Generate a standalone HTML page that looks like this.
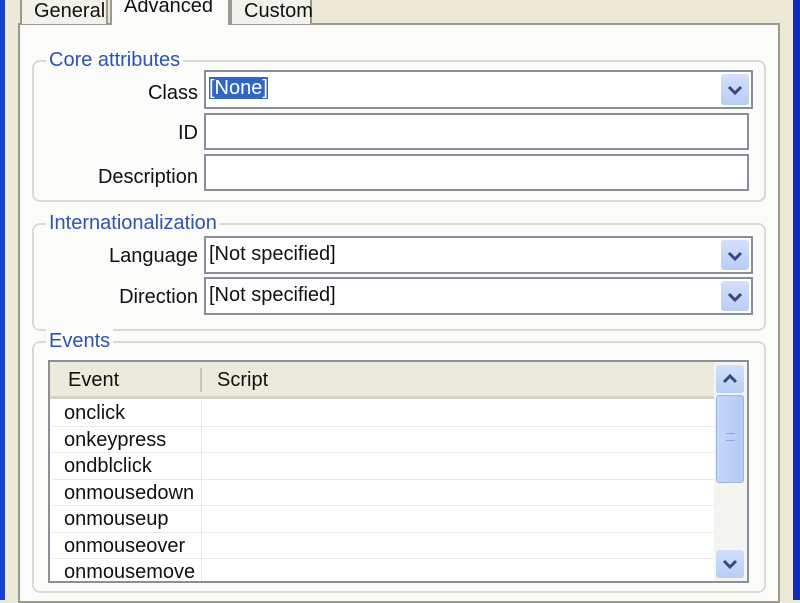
<!DOCTYPE html><html><head><style>
*{box-sizing:border-box;margin:0;padding:0}
body{width:800px;height:600px;overflow:hidden;background:#ece9d8;font-family:"Liberation Sans",sans-serif;font-size:20px;color:#111;position:relative}
.a{position:absolute}
.tab{position:absolute;border:2px solid #9a9a90;border-bottom:none;border-radius:4px 4px 0 0;background:#f2f2ea;padding-left:12px;line-height:22px}
.grp{position:absolute;border:2px solid #dcdad0;border-radius:8px}
.gl{position:absolute;color:#2a55b0;background:#fbfbf9;padding:0 3px;top:-14px;left:12px;line-height:24px}
.in{position:absolute;border:2px solid #8a8e98;background:#fff;line-height:32px;padding-left:3px}
.dd{position:absolute;right:2px;top:2px;bottom:2px;width:28px;background:linear-gradient(#d4e0fb,#b8cdf6);border-radius:3px}
.lbl{position:absolute;text-align:right;width:190px;left:8px}
.row{position:absolute;left:2px;width:662px;height:26.5px;border-bottom:1px solid #eceae0;padding-left:12px;line-height:26px}
</style></head><body>
<div class="a" style="left:0;top:0;width:5px;height:600px;background:#1a3fd0"></div>
<div class="a" style="left:793px;top:0;width:7px;height:600px;background:#0b2db8"></div>
<div class="a" style="left:18px;top:23px;width:762px;height:580px;background:#fbfbf9;border:2px solid #9a9a90"></div>
<div class="tab" style="left:20px;top:-4px;width:88px;height:28px;line-height:26px">General</div>
<div class="tab" style="left:230px;top:-4px;width:82px;height:28px;line-height:26px">Custom</div>
<div class="tab" style="left:110px;top:-10px;width:120px;height:35px;background:#fbfbf9;border-top:3px solid #e8a030;line-height:26px">Advanced</div>

<div class="grp" style="left:32px;top:60px;width:734px;height:142px"><div class="gl">Core attributes</div></div>
<div class="lbl" style="top:82px">Class</div>
<div class="in" style="left:204px;top:70px;width:549px;height:39px"><span style="background:#3166c5;color:#fff;line-height:22px;display:inline-block;margin-top:5px">[None]</span><div class="dd"><svg width="28" height="33"><path d="M8 13l6 6 6-6" stroke="#344a80" stroke-width="3" fill="none"/></svg></div></div>
<div class="lbl" style="top:122px">ID</div>
<div class="in" style="left:204px;top:113px;width:545px;height:37px"></div>
<div class="lbl" style="top:166px">Description</div>
<div class="in" style="left:204px;top:154px;width:545px;height:37px"></div>

<div class="grp" style="left:32px;top:223px;width:734px;height:108px"><div class="gl">Internationalization</div></div>
<div class="lbl" style="top:245px">Language</div>
<div class="in" style="left:204px;top:236px;width:549px;height:38px">[Not specified]<div class="dd"><svg width="28" height="32"><path d="M8 13l6 6 6-6" stroke="#344a80" stroke-width="3" fill="none"/></svg></div></div>
<div class="lbl" style="top:286px">Direction</div>
<div class="in" style="left:204px;top:277px;width:549px;height:38px">[Not specified]<div class="dd"><svg width="28" height="32"><path d="M8 13l6 6 6-6" stroke="#344a80" stroke-width="3" fill="none"/></svg></div></div>

<div class="grp" style="left:32px;top:341px;width:734px;height:252px"><div class="gl">Events</div></div>
<div class="a" style="left:48px;top:360px;width:701px;height:223px;border:2px solid #8a8e98;background:#fff;overflow:hidden">
<div class="a" style="left:0;top:0;width:664px;height:37px;background:#ebeadb;border-bottom:3px solid #d6d3c4;line-height:36px"><span class="a" style="left:18px">Event</span><span class="a" style="left:167px">Script</span><div class="a" style="left:150px;top:6px;width:2px;height:24px;background:#c8c5b6"></div></div>
<div class="a" style="left:151px;top:38px;width:1px;height:190px;background:#eceae0"></div>
<div class="row" style="top:38px">onclick</div>
<div class="row" style="top:64.5px">onkeypress</div>
<div class="row" style="top:91px">ondblclick</div>
<div class="row" style="top:117.5px">onmousedown</div>
<div class="row" style="top:144px">onmouseup</div>
<div class="row" style="top:170.5px">onmouseover</div>
<div class="row" style="top:197px">onmousemove</div>
<div class="a" style="left:664px;top:0;width:33px;height:219px;background:#f4f4f0">
<div class="a" style="left:2px;top:3px;width:28px;height:28px;background:linear-gradient(#d4e0fb,#b8cdf6);border-radius:3px"><svg width="28" height="28"><path d="M8 17l6-6 6 6" stroke="#344a80" stroke-width="3" fill="none"/></svg></div>
<div class="a" style="left:2px;top:33px;width:28px;height:88px;background:linear-gradient(90deg,#c6d6fa,#b4c9f4);border:1px solid #9fb4e2;border-radius:3px"><div class="a" style="left:9px;top:37px;width:9px;height:8px;border-top:1px solid #8ea4d8;border-bottom:1px solid #8ea4d8"></div></div>
<div class="a" style="left:2px;top:188px;width:28px;height:28px;background:linear-gradient(#d4e0fb,#b8cdf6);border-radius:3px"><svg width="28" height="28"><path d="M8 11l6 6 6-6" stroke="#344a80" stroke-width="3" fill="none"/></svg></div>
</div></div>
</body></html>
